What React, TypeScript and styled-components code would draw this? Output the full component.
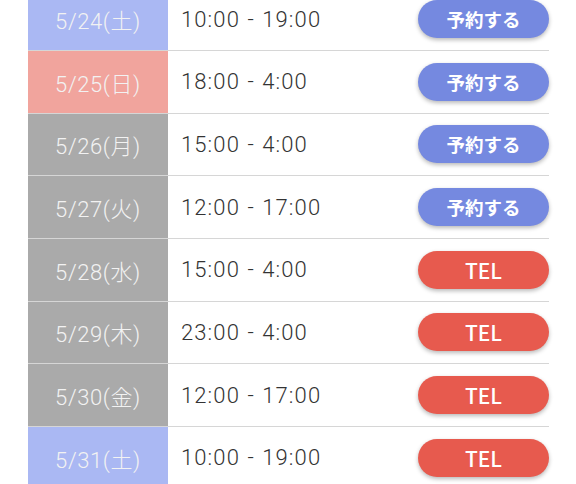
import React from "react";
import styled, { createGlobalStyle } from "styled-components";

const GlobalStyle = createGlobalStyle`
  html, body {
    margin: 0;
    padding: 0;
    background: #ffffff;
    overflow: hidden;
  }
  body {
    font-family: Roboto, "Noto Sans CJK JP", sans-serif;
  }
`;

const Table = styled.div`
  margin: -11.67px 0 0 28px;
  width: 521px;
  display: flex;
  flex-direction: column;
`;

const Row = styled.div`
  box-sizing: border-box;
  height: 62.67px;
  display: grid;
  grid-template-columns: 140px 1fr auto;
  align-items: center;
  border-bottom: 1px solid #d6d6d6;
`;

type Kind = "sat" | "sun" | "weekday";

const dateBg: Record<Kind, string> = {
  sat: "#aab8f3",
  sun: "#f1a49d",
  weekday: "#aaaaaa",
};

const DateCell = styled.div<{ $kind: Kind }>`
  height: 100%;
  background: ${(p) => dateBg[p.$kind]};
  display: flex;
  align-items: center;
  justify-content: center;
  color: #f2f2f2;
  font-size: 22px;
  font-weight: 300;
  letter-spacing: 0.6px;
  font-family: Roboto, "Noto Sans CJK JP", sans-serif;
`;

const TimeCell = styled.div`
  padding-left: 13px;
  color: #333333;
  font-size: 22px;
  font-weight: 300;
  letter-spacing: 1.1px;
  word-spacing: 1px;
  font-family: Roboto, "Noto Sans CJK JP", sans-serif;
`;

const ActionButton = styled.button<{ $tel: boolean }>`
  width: 131px;
  height: 38px;
  border: none;
  border-radius: 19px;
  background: ${(p) => (p.$tel ? "#e75a4e" : "#7589e0")};
  color: #ffffff;
  font-family: "Noto Sans CJK JP", "Noto Sans", sans-serif;
  font-size: ${(p) => (p.$tel ? "21px" : "18.5px")};
  font-weight: ${(p) => (p.$tel ? 500 : 700)};
  box-shadow: 0 2px 4px rgba(0, 0, 0, 0.28);
  display: flex;
  align-items: center;
  justify-content: center;
  padding: 0;
  cursor: pointer;
`;

const rows: { date: string; kind: Kind; time: string; tel: boolean }[] = [
  { date: "5/24(土)", kind: "sat", time: "10:00 - 19:00", tel: false },
  { date: "5/25(日)", kind: "sun", time: "18:00 - 4:00", tel: false },
  { date: "5/26(月)", kind: "weekday", time: "15:00 - 4:00", tel: false },
  { date: "5/27(火)", kind: "weekday", time: "12:00 - 17:00", tel: false },
  { date: "5/28(水)", kind: "weekday", time: "15:00 - 4:00", tel: true },
  { date: "5/29(木)", kind: "weekday", time: "23:00 - 4:00", tel: true },
  { date: "5/30(金)", kind: "weekday", time: "12:00 - 17:00", tel: true },
  { date: "5/31(土)", kind: "sat", time: "10:00 - 19:00", tel: true },
];

export default function App() {
  return (
    <>
      <GlobalStyle />
      <Table>
        {rows.map((r) => (
          <Row key={r.date}>
            <DateCell $kind={r.kind}>{r.date}</DateCell>
            <TimeCell>{r.time}</TimeCell>
            <ActionButton $tel={r.tel}>{r.tel ? "TEL" : "予約する"}</ActionButton>
          </Row>
        ))}
      </Table>
    </>
  );
}
